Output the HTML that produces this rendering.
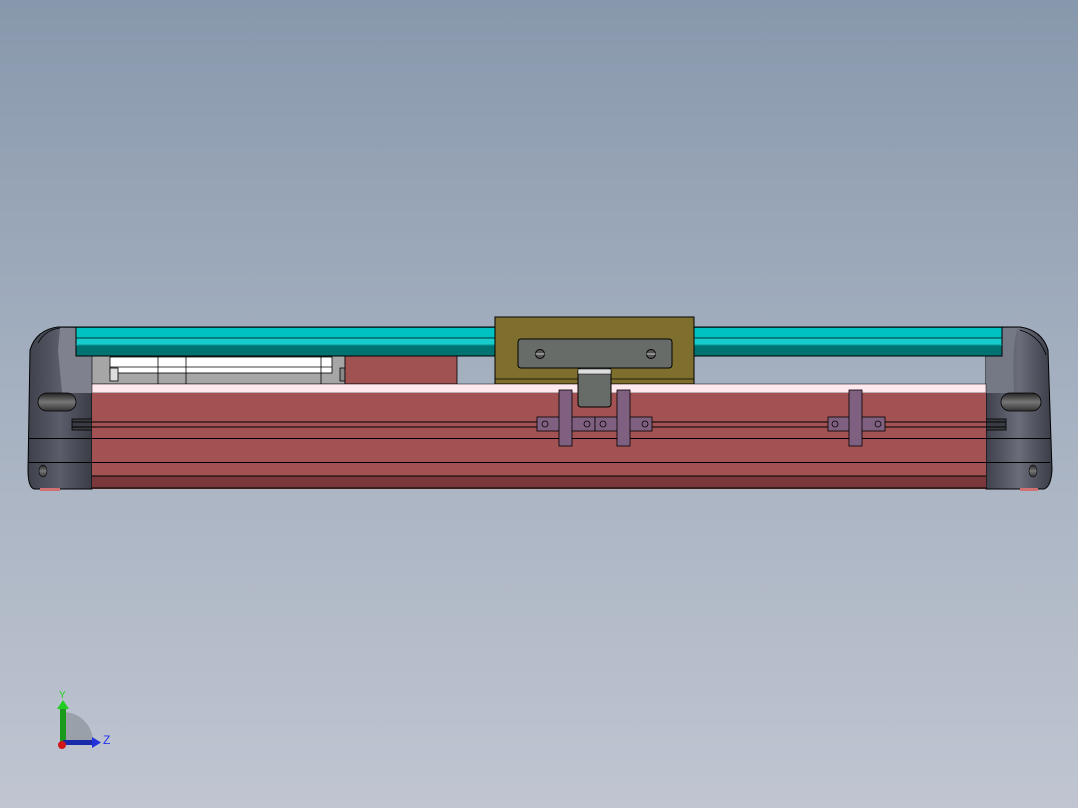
<!DOCTYPE html>
<html><head><meta charset="utf-8"><style>
html,body{margin:0;padding:0;width:1078px;height:808px;overflow:hidden}
body{background:linear-gradient(180deg,#8898ac 0%,#a3afbf 45%,#c0c5d1 100%)}
svg{position:absolute;left:0;top:0}
</style></head><body>
<svg width="1078" height="808" viewBox="0 0 1078 808" xmlns="http://www.w3.org/2000/svg">
<defs>
<linearGradient id="cap" x1="0" x2="1"><stop offset="0" stop-color="#3e414b"/><stop offset=".5" stop-color="#5a5d6a"/><stop offset="1" stop-color="#3a3c46"/></linearGradient>
<linearGradient id="capR" x1="0" x2="1"><stop offset="0" stop-color="#3e414b"/><stop offset=".5" stop-color="#6a6d7a"/><stop offset="1" stop-color="#3a3c46"/></linearGradient>
<linearGradient id="knob" x1="0" y1="0" x2="0" y2="1"><stop offset="0" stop-color="#222"/><stop offset=".5" stop-color="#777"/><stop offset="1" stop-color="#333"/></linearGradient>
</defs>
<!-- left cap -->
<path d="M92 327 L58 327 Q36 330 30 350 L28 470 Q28 487 34 489 L92 489 Z" fill="url(#cap)" stroke="#000"/>
<path d="M60 328 L76 328 L76 356 L92 356 L92 393 L62 393 L58 350 Z" fill="#7f828e"/>
<path d="M38 343 Q45 330 60 328" fill="none" stroke="#000" stroke-width="0.8"/>
<rect x="38" y="393" width="38" height="18" rx="9" fill="url(#knob)" stroke="#000" stroke-width="0.8"/>
<rect x="72" y="419" width="20" height="11" fill="#3a3c44" stroke="#000" stroke-width="0.8"/>
<ellipse cx="43" cy="471" rx="4" ry="6" fill="url(#knob)" stroke="#000" stroke-width="0.6"/>
<rect x="40" y="488" width="20" height="3" fill="#d07070"/>
<!-- right cap -->
<path d="M986 327 L1020 327 Q1042 330 1048 350 L1052 470 Q1051 487 1044 489 L986 489 Z" fill="url(#capR)" stroke="#000"/>
<path d="M1002 328 L1018 328 Q1012 340 1014 393 L986 393 L986 356 L1002 356 Z" fill="#757885"/>
<path d="M1020 330 Q1040 336 1046 355" fill="none" stroke="#000" stroke-width="0.8"/>
<rect x="1001" y="393" width="40" height="18" rx="9" fill="url(#knob)" stroke="#000" stroke-width="0.8"/>
<rect x="986" y="419" width="20" height="11" fill="#3a3c44" stroke="#000" stroke-width="0.8"/>
<ellipse cx="1033" cy="471" rx="4" ry="6" fill="url(#knob)" stroke="#000" stroke-width="0.6"/>
<rect x="1020" y="488" width="18" height="3" fill="#d07070"/>
<!-- left interior -->
<rect x="92" y="356" width="253" height="28" fill="#a6a6a6" stroke="#000" stroke-width="0.6"/>
<rect x="110" y="357" width="222" height="16" fill="#fff" stroke="#000" stroke-width="0.8"/>
<line x1="110" y1="367" x2="332" y2="367" stroke="#000" stroke-width="0.8"/>
<line x1="158" y1="357" x2="158" y2="384" stroke="#000" stroke-width="0.8"/>
<line x1="186" y1="357" x2="186" y2="384" stroke="#000" stroke-width="0.8"/>
<line x1="321" y1="357" x2="321" y2="384" stroke="#000" stroke-width="0.8"/>
<rect x="110" y="368" width="8" height="13" fill="#ddd" stroke="#000" stroke-width="0.8"/>
<rect x="340" y="368" width="5" height="13" fill="#888" stroke="#000" stroke-width="0.8"/>
<rect x="345" y="355" width="112" height="29" fill="#a05252" stroke="#000" stroke-width="0.8"/>
<!-- rail -->
<rect x="76" y="327" width="926" height="29" fill="#007272" stroke="#000" stroke-width="1"/>
<rect x="76.5" y="328" width="925" height="10" fill="#00c2c2"/>
<rect x="76.5" y="338" width="925" height="7" fill="#18cccc"/>
<line x1="76" y1="338" x2="1002" y2="338" stroke="#000" stroke-width="0.8"/>
<line x1="76" y1="345" x2="1002" y2="345" stroke="#009a9a" stroke-width="1"/>
<!-- carriage -->
<rect x="495" y="317" width="199" height="67" fill="#7f6f2e" stroke="#000" stroke-width="1"/>
<line x1="495" y1="379" x2="694" y2="379" stroke="#000" stroke-width="0.8"/>
<rect x="518" y="339" width="154" height="29" rx="3" fill="#686c68" stroke="#000" stroke-width="1"/>
<circle cx="540" cy="354" r="4.5" fill="#555" stroke="#000"/><line x1="535.5" y1="354" x2="544.5" y2="354" stroke="#ccc" stroke-width="1"/>
<circle cx="651" cy="354" r="4.5" fill="#555" stroke="#000"/><line x1="646.5" y1="354" x2="655.5" y2="354" stroke="#ccc" stroke-width="1"/>
<!-- pink strip -->
<rect x="92" y="384" width="894" height="9" fill="#ffe9ee" stroke="#000" stroke-width="0.5"/>
<!-- body -->
<rect x="92" y="393" width="894" height="96" fill="#a25253"/>
<rect x="92" y="476" width="894" height="13" fill="#7a383d"/>
<g stroke="#000" stroke-width="1">
<line x1="72" y1="422" x2="1006" y2="422"/><line x1="72" y1="427" x2="1006" y2="427"/>
<line x1="28" y1="438.5" x2="1050" y2="438.5"/><line x1="28" y1="462.5" x2="1050" y2="462.5"/>
<line x1="92" y1="476" x2="986" y2="476"/><line x1="92" y1="488" x2="986" y2="488"/>
</g>
<!-- tab -->
<rect x="578" y="368" width="33" height="39" rx="3" fill="#686c68" stroke="#000"/>
<rect x="578" y="369" width="33" height="5" fill="#ddd" stroke="#000" stroke-width="0.5"/>
<!-- brackets -->
<g fill="#806080" stroke="#000" stroke-width="0.8">
<rect x="537" y="417" width="58" height="14"/><rect x="595" y="417" width="57" height="14"/><rect x="828" y="417" width="57" height="14"/>
<rect x="559" y="390" width="13" height="56"/><rect x="617" y="390" width="13" height="56"/><rect x="849" y="390" width="13" height="56"/>
</g>
<g fill="none" stroke="#000" stroke-width="0.8">
<circle cx="545" cy="424" r="3"/><circle cx="587" cy="424" r="3"/><circle cx="603" cy="424" r="3"/><circle cx="645" cy="424" r="3"/><circle cx="835" cy="424" r="3"/><circle cx="878" cy="424" r="3"/>
</g>
<!-- triad -->
<path d="M63 742 L63 712 A30 30 0 0 1 93 742 Z" fill="#9aa0aa"/>
<rect x="60" y="707" width="6" height="35" fill="#1a9a1a"/>
<path d="M57 709 L63 700 L69 709 Z" fill="#22cc22"/>
<rect x="63" y="740" width="30" height="5" fill="#1a2aaa"/>
<path d="M92 737 L101 742.5 L92 748 Z" fill="#2233dd"/>
<circle cx="62" cy="745" r="4" fill="#d01818"/>
<text x="59" y="698" font-family="Liberation Sans, sans-serif" font-size="10" fill="#20d020">Y</text>
<text x="103" y="744" font-family="Liberation Sans, sans-serif" font-size="12" fill="#2233ee">Z</text>
</svg>
</body></html>
